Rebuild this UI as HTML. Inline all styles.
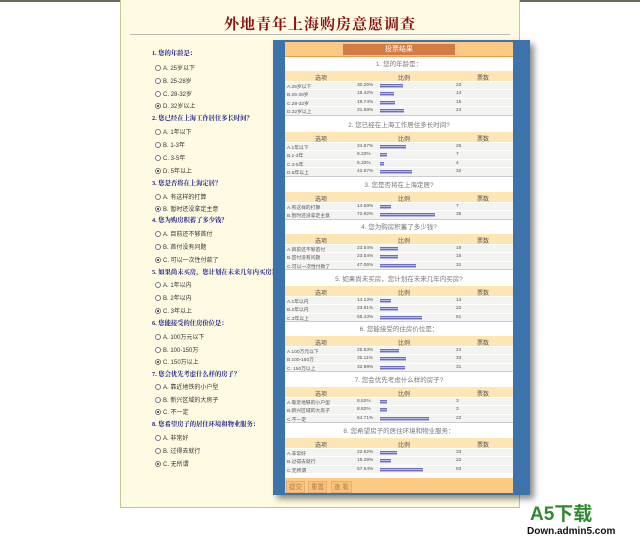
<!DOCTYPE html>
<html><head><meta charset="utf-8"><style>
*{margin:0;padding:0;box-sizing:border-box}
body{width:640px;height:539px;background:#fff;position:relative;overflow:hidden;font-family:"Liberation Sans","Noto Sans CJK SC",sans-serif}
#top{position:absolute;left:0;top:0;width:640px;height:2px;background:#6a6a5a}
#box{position:absolute;left:120px;top:0;width:400px;height:508px;background:#fefbe2;border:1px solid #c9c39a;border-top:none}
#ttl{position:absolute;left:120px;top:13px;width:400px;text-align:center;font-size:15px;font-weight:bold;color:#8b1010;font-family:"Liberation Serif","Noto Serif CJK SC",serif;letter-spacing:1px}
#hr{position:absolute;left:130px;top:34px;width:380px;height:1px;background:#bbb}
.q{position:absolute;left:152px;font-size:6.3px;font-weight:bold;color:#1a1a8a;white-space:nowrap;font-family:"Liberation Serif","Noto Serif CJK SC",serif}
.o{position:absolute;left:155px;font-size:6px;color:#333;white-space:nowrap}
.o i{display:inline-block;width:6px;height:6px;border:1px solid #777;border-radius:50%;background:#fff;vertical-align:middle;margin-right:2px;position:relative}
.o i.c:after{content:"";position:absolute;left:1px;top:1px;width:2px;height:2px;border-radius:50%;background:#222}
#panel{position:absolute;left:273px;top:40px;width:257px;height:455px;background:#3d72ab;box-shadow:4px 4px 6px rgba(0,0,0,.45)}
#inner{position:absolute;left:285px;top:42px;width:228px;height:451px;background:#fff}
#hd{position:absolute;left:285px;top:42px;width:228px;height:15px;background:#fdca84;border-bottom:1px solid #e8a050}
#hdt{position:absolute;left:343px;top:44px;width:112px;height:11px;background:#d37a45;color:#fff;font-size:7px;text-align:center;line-height:11px}
.s{position:absolute;left:285px;width:228px;border-bottom:1px solid #ccc}
.s .t{height:13px;line-height:13px;text-align:center;font-size:6.5px;color:#777}
.s .h{height:10px;background:#fde5b4;font-size:6px;color:#555;position:relative}
.s .h span{position:absolute;top:2px}
.s .r{height:8.4px;background:#f3f3f1;font-size:4.8px;color:#555;position:relative;border-top:1px solid #fff}
.s .r span{position:absolute;top:1px;white-space:nowrap}
.s .r b{position:absolute;left:95px;top:2px;height:4px;background:repeating-linear-gradient(#6e6ec0 0 1px,#b8b8e4 1px 2px)}
#ft{position:absolute;left:285px;top:478px;width:228px;height:15px;background:#fdca84}
.bt{position:absolute;top:481px;height:12px;font-size:6.5px;color:#b08050;border:1px solid #e0b070;background:#fcc07a;line-height:11px;padding:0 2px}
#a5{position:absolute;left:530px;top:505px;font-size:19px;font-weight:bold;color:#2f8a2f;line-height:19px}
#dn{position:absolute;left:527px;top:526px;font-size:10px;font-weight:bold;color:#111;line-height:11px}
</style></head><body>
<div id="top"></div>
<div id="box"></div>
<div id="ttl">外地青年上海购房意愿调查</div>
<div id="hr"></div>

<div class="q" style="top:48px">1. 您的年龄是：</div>
<div class="o" style="top:63px"><i></i>A. 25岁以下</div>
<div class="o" style="top:76px"><i></i>B. 25-28岁</div>
<div class="o" style="top:89px"><i></i>C. 28-32岁</div>
<div class="o" style="top:101px"><i class="c"></i>D. 32岁以上</div>
<div class="q" style="top:113px">2. 您已经在上海工作居住多长时间？</div>
<div class="o" style="top:127px"><i></i>A. 1年以下</div>
<div class="o" style="top:140px"><i></i>B. 1-3年</div>
<div class="o" style="top:153px"><i></i>C. 3-5年</div>
<div class="o" style="top:166px"><i class="c"></i>D. 5年以上</div>
<div class="q" style="top:178px">3. 您是否将在上海定居？</div>
<div class="o" style="top:192px"><i></i>A. 有这样的打算</div>
<div class="o" style="top:204px"><i class="c"></i>B. 暂时还没拿定主意</div>
<div class="q" style="top:215px">4. 您为购房积蓄了多少钱？</div>
<div class="o" style="top:229px"><i></i>A. 目前还不够首付</div>
<div class="o" style="top:242px"><i></i>B. 首付没有问题</div>
<div class="o" style="top:255px"><i class="c"></i>C. 可以一次性付款了</div>
<div class="q" style="top:267px">5. 如果尚未买房，您计划在未来几年内买房？</div>
<div class="o" style="top:280px"><i></i>A. 1年以内</div>
<div class="o" style="top:293px"><i></i>B. 2年以内</div>
<div class="o" style="top:306px"><i class="c"></i>C. 3年以上</div>
<div class="q" style="top:318px">6. 您能接受的住房价位是：</div>
<div class="o" style="top:332px"><i></i>A. 100万元以下</div>
<div class="o" style="top:345px"><i></i>B. 100-150万</div>
<div class="o" style="top:357px"><i class="c"></i>C.  150万以上</div>
<div class="q" style="top:369px">7. 您会优先考虑什么样的房子？</div>
<div class="o" style="top:382px"><i></i>A. 靠近地铁的小户型</div>
<div class="o" style="top:395px"><i></i>B. 新兴区域的大房子</div>
<div class="o" style="top:407px"><i class="c"></i>C. 不一定</div>
<div class="q" style="top:419px">8. 您希望房子的居住环境和物业服务：</div>
<div class="o" style="top:433px"><i></i>A. 非常好</div>
<div class="o" style="top:446px"><i></i>B. 过得去就行</div>
<div class="o" style="top:459px"><i class="c"></i>C. 无所谓</div>

<div id="panel"></div>
<div id="inner"></div>
<div id="hd"></div>
<div id="hdt">投票结果</div>

<div class="s" style="top:58px"><div class="t">1. 您的年龄是：</div><div class="h"><span style="left:30px">选项</span><span style="left:113px">比例</span><span style="left:192px">票数</span></div>
<div class="r"><span style="left:2px">A.25岁以下</span><span style="left:72px">30.26%</span><b style="width:23px"></b><span style="left:171px">23</span></div>
<div class="r"><span style="left:2px">B.25-28岁</span><span style="left:72px">18.42%</span><b style="width:14px"></b><span style="left:171px">14</span></div>
<div class="r"><span style="left:2px">C.28-32岁</span><span style="left:72px">19.74%</span><b style="width:15px"></b><span style="left:171px">15</span></div>
<div class="r"><span style="left:2px">D.32岁以上</span><span style="left:72px">31.58%</span><b style="width:24px"></b><span style="left:171px">24</span></div></div>

<div class="s" style="top:119px"><div class="t">2. 您已经在上海工作居住多长时间?</div><div class="h"><span style="left:30px">选项</span><span style="left:113px">比例</span><span style="left:192px">票数</span></div>
<div class="r"><span style="left:2px">A.1年以下</span><span style="left:72px">34.67%</span><b style="width:26px"></b><span style="left:171px">26</span></div>
<div class="r"><span style="left:2px">B.1-3年</span><span style="left:72px">9.33%</span><b style="width:7px"></b><span style="left:171px">7</span></div>
<div class="r"><span style="left:2px">C.3-5年</span><span style="left:72px">5.33%</span><b style="width:4px"></b><span style="left:171px">4</span></div>
<div class="r"><span style="left:2px">D.5年以上</span><span style="left:72px">42.67%</span><b style="width:32px"></b><span style="left:171px">32</span></div></div>

<div class="s" style="top:179px"><div class="t">3. 您是否将在上海定居?</div><div class="h"><span style="left:30px">选项</span><span style="left:113px">比例</span><span style="left:192px">票数</span></div>
<div class="r"><span style="left:2px">A.有这样的打算</span><span style="left:72px">14.58%</span><b style="width:11px"></b><span style="left:171px">7</span></div>
<div class="r"><span style="left:2px">B.暂时还没拿定主意</span><span style="left:72px">72.92%</span><b style="width:55px"></b><span style="left:171px">35</span></div></div>

<div class="s" style="top:221px"><div class="t">4. 您为购房积蓄了多少钱?</div><div class="h"><span style="left:30px">选项</span><span style="left:113px">比例</span><span style="left:192px">票数</span></div>
<div class="r"><span style="left:2px">A.目前还不够首付</span><span style="left:72px">23.54%</span><b style="width:18px"></b><span style="left:171px">16</span></div>
<div class="r"><span style="left:2px">B.首付没有问题</span><span style="left:72px">23.54%</span><b style="width:18px"></b><span style="left:171px">16</span></div>
<div class="r"><span style="left:2px">C.可以一次性付款了</span><span style="left:72px">47.06%</span><b style="width:36px"></b><span style="left:171px">31</span></div></div>

<div class="s" style="top:273px"><div class="t">5. 如果尚未买房，您计划在未来几年内买房?</div><div class="h"><span style="left:30px">选项</span><span style="left:113px">比例</span><span style="left:192px">票数</span></div>
<div class="r"><span style="left:2px">A.1年以内</span><span style="left:72px">14.13%</span><b style="width:11px"></b><span style="left:171px">13</span></div>
<div class="r"><span style="left:2px">B.2年以内</span><span style="left:72px">23.91%</span><b style="width:18px"></b><span style="left:171px">22</span></div>
<div class="r"><span style="left:2px">C.3年以上</span><span style="left:72px">55.43%</span><b style="width:42px"></b><span style="left:171px">51</span></div></div>

<div class="s" style="top:323px"><div class="t">6. 您能接受的住房价位是：</div><div class="h"><span style="left:30px">选项</span><span style="left:113px">比例</span><span style="left:192px">票数</span></div>
<div class="r"><span style="left:2px">A.100万元以下</span><span style="left:72px">25.53%</span><b style="width:19px"></b><span style="left:171px">24</span></div>
<div class="r"><span style="left:2px">B.100-150万</span><span style="left:72px">35.11%</span><b style="width:26px"></b><span style="left:171px">33</span></div>
<div class="r"><span style="left:2px">C. 150万以上</span><span style="left:72px">32.98%</span><b style="width:25px"></b><span style="left:171px">31</span></div></div>

<div class="s" style="top:374px"><div class="t">7. 您会优先考虑什么样的房子?</div><div class="h"><span style="left:30px">选项</span><span style="left:113px">比例</span><span style="left:192px">票数</span></div>
<div class="r"><span style="left:2px">A.靠近地铁的小户型</span><span style="left:72px">8.82%</span><b style="width:7px"></b><span style="left:171px">3</span></div>
<div class="r"><span style="left:2px">B.新兴区域的大房子</span><span style="left:72px">8.82%</span><b style="width:7px"></b><span style="left:171px">3</span></div>
<div class="r"><span style="left:2px">C.不一定</span><span style="left:72px">64.71%</span><b style="width:49px"></b><span style="left:171px">22</span></div></div>

<div class="s" style="top:425px;border-bottom:none"><div class="t">8. 您希望房子的居住环境和物业服务：</div><div class="h"><span style="left:30px">选项</span><span style="left:113px">比例</span><span style="left:192px">票数</span></div>
<div class="r"><span style="left:2px">A.非常好</span><span style="left:72px">22.92%</span><b style="width:17px"></b><span style="left:171px">33</span></div>
<div class="r"><span style="left:2px">B.过得去就行</span><span style="left:72px">15.28%</span><b style="width:11px"></b><span style="left:171px">22</span></div>
<div class="r"><span style="left:2px">C.无所谓</span><span style="left:72px">57.64%</span><b style="width:43px"></b><span style="left:171px">83</span></div></div>

<div id="ft"></div>
<div class="bt" style="left:286px">提交</div>
<div class="bt" style="left:308px">重置</div>
<div class="bt" style="left:331px">查 看</div>

<div id="a5">A5下载</div>
<div id="dn">Down.admin5.com</div>
</body></html>
